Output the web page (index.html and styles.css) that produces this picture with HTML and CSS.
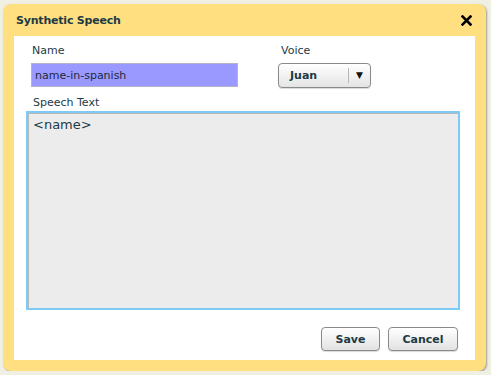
FILE: index.html
```html
<!DOCTYPE html>
<html lang="en">
<head>
    <meta charset="UTF-8">
    <title>Synthetic Speech</title>
    <link rel="stylesheet" href="styles.css">
</head>
<body>

<div class="dialog">
    <div class="titlebar">
        <span class="title">Synthetic Speech</span>
        <svg class="close" width="11" height="11" viewBox="0 0 11 11">
            <path d="M1.5 1.5 L9.5 9.5 M9.5 1.5 L1.5 9.5" stroke="#000" stroke-width="2.6" stroke-linecap="square"/>
        </svg>
    </div>
    <div class="content">
        <div class="top-row">
            <div class="field name-field">
                <label>Name</label>
                <input type="text" class="name-input" value="name-in-spanish">
            </div>
            <div class="field voice-field">
                <label>Voice</label>
                <div class="select">
                    <span class="select-value">Juan</span>
                    <span class="select-arrow">&#9660;</span>
                </div>
            </div>
        </div>
        <label class="speech-label">Speech Text</label>
        <textarea class="speech-text">&lt;name&gt;</textarea>
        <div class="actions">
            <button class="btn">Save</button>
            <button class="btn">Cancel</button>
        </div>
    </div>
</div>

</body>
</html>
```

FILE: styles.css
```css
* {
    box-sizing: border-box;
}
body {
    font-family: 'DejaVu Sans', Verdana, sans-serif;
    margin: 0;
    padding: 0;
    background-color: #efefe2;
    color: #1d3a45;
}
.dialog {
    margin: 4px 0 0 3px;
    width: 483px;
    height: 367px;
    background-color: #ffdf80;
    border-radius: 8px;
    padding: 0 11px 11px;
    display: flex;
    flex-direction: column;
    box-shadow: 1px 1px 2px rgba(0, 0, 0, 0.35);
}
.titlebar {
    height: 32px;
    display: flex;
    justify-content: space-between;
    align-items: center;
    padding: 0 3px 0 2px;
}
.title {
    font-size: 11px;
    font-weight: bold;
    letter-spacing: -0.2px;
}
.close {
    display: block;
    margin-top: 1px;
}
.content {
    flex: 1;
    background-color: #fff;
    padding: 8px 16px 9px 12px;
    display: flex;
    flex-direction: column;
}
.top-row {
    display: flex;
    gap: 40px;
    padding-left: 5px;
}
.field {
    display: flex;
    flex-direction: column;
}
label {
    font-size: 11px;
    line-height: 13px;
    margin: 0 0 6px 1px;
    display: block;
}
.voice-field label {
    margin-left: 3px;
}
.name-input {
    width: 207px;
    height: 24px;
    background-color: #9999ff;
    border: 1px solid #b4b4c8;
    font-family: 'DejaVu Sans', Verdana, sans-serif;
    font-size: 11px;
    color: #1d2a40;
    padding: 0 3px;
    margin: 0;
}
.select {
    width: 93px;
    height: 25px;
    border: 1px solid #8a8a8a;
    border-radius: 4px;
    background: linear-gradient(#ffffff, #e4e4e4);
    display: flex;
    align-items: center;
    box-shadow: 0 1px 1px rgba(0, 0, 0, 0.15);
}
.select-value {
    flex: 1;
    font-size: 11px;
    font-weight: bold;
    padding-left: 11px;
}
.select-arrow {
    width: 22px;
    border-left: 1px solid #b8b8b8;
    height: 15px;
    font-size: 9px;
    line-height: 15px;
    text-align: center;
    color: #111;
}
.speech-label {
    margin: 8px 0 2px 7px;
}
.speech-text {
    width: 434px;
    height: 199px;
    border: 2px solid #7ccaf5;
    box-shadow: inset 1px 1px 0 #b8b8b8;
    background-color: #ececec;
    font-family: 'DejaVu Sans', Verdana, sans-serif;
    font-size: 13px;
    color: #1d3a45;
    padding: 4px 5px;
    resize: none;
    outline: none;
    margin: 0;
}
.actions {
    margin-top: auto;
    display: flex;
    justify-content: flex-end;
    gap: 8px;
    padding-right: 1px;
}
.btn {
    height: 24px;
    padding: 0;
    border: 1px solid #8a8a8a;
    border-radius: 4px;
    background: linear-gradient(#ffffff, #e2e2e2);
    font-family: 'DejaVu Sans', Verdana, sans-serif;
    font-size: 11px;
    font-weight: bold;
    color: #1d3a45;
    box-shadow: 0 1px 1px rgba(0, 0, 0, 0.15);
    cursor: pointer;
}
.btn:first-child {
    width: 59px;
}
.btn:last-child {
    width: 70px;
}
```
